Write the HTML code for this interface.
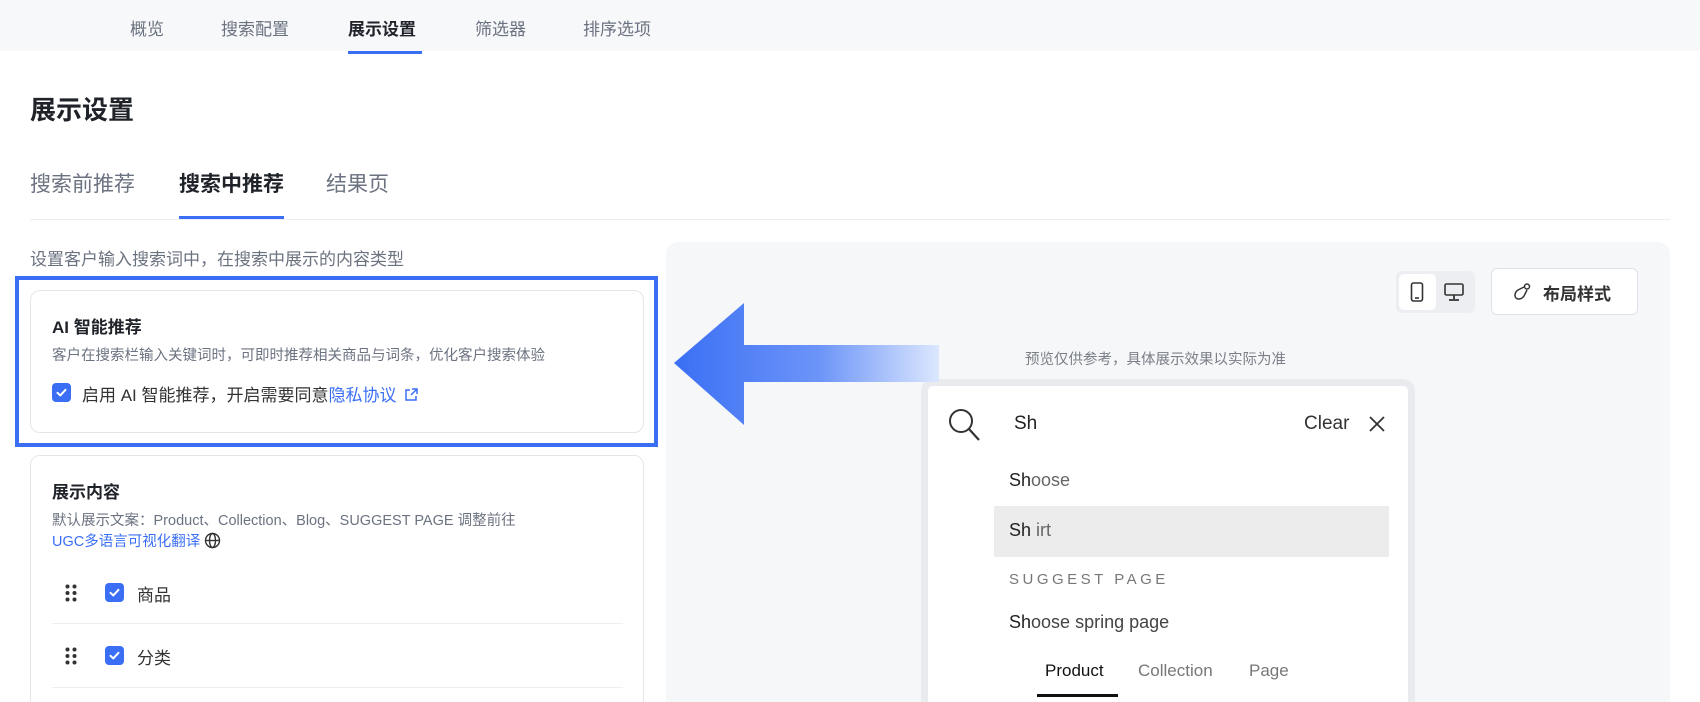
<!DOCTYPE html>
<html style="width:1700px;height:702px;overflow:hidden"><head><meta charset="utf-8"><style>
*{box-sizing:border-box;margin:0;padding:0}
body{width:1700px;height:702px;overflow:hidden;background:#fff;font-family:"Liberation Sans","Noto Sans CJK SC",sans-serif;color:#1f2329;position:relative}
.a{position:absolute;white-space:nowrap}
.nav{position:absolute;left:0;top:0;width:1700px;height:51px;background:#f7f8fa}
.cb{position:absolute;width:19px;height:19px;border-radius:4px;background:#3a6ff5}
.cb svg{position:absolute;left:3px;top:3px}
.grey{color:#6b7280}
</style></head><body>
<div class="nav"></div>
<div class="a grey" style="left:130px;top:15px;font-size:17px">概览</div>
<div class="a grey" style="left:221px;top:15px;font-size:17px">搜索配置</div>
<div class="a" style="left:348px;top:15px;font-size:17px;font-weight:bold;color:#1f2329">展示设置</div>
<div class="a grey" style="left:475px;top:15px;font-size:17px">筛选器</div>
<div class="a grey" style="left:583px;top:15px;font-size:17px">排序选项</div>
<div class="a" style="left:348px;top:51px;width:74px;height:3px;background:#3a6ff5"></div>

<div class="a" style="left:30px;top:90px;font-size:26px;font-weight:bold">展示设置</div>

<div class="a grey" style="left:30px;top:168px;font-size:21px">搜索前推荐</div>
<div class="a" style="left:179px;top:168px;font-size:21px;font-weight:bold">搜索中推荐</div>
<div class="a grey" style="left:326px;top:168px;font-size:21px">结果页</div>
<div class="a" style="left:30px;top:219px;width:1640px;height:1px;background:#eceef1"></div>
<div class="a" style="left:179px;top:216px;width:105px;height:3px;background:#3a6ff5"></div>

<div class="a grey" style="left:30px;top:245px;font-size:17px">设置客户输入搜索词中，在搜索中展示的内容类型</div>

<div class="a" style="left:15px;top:276px;width:643px;height:171px;border:4px solid #3a6ff5"></div>
<div class="a" style="left:30px;top:290px;width:614px;height:143px;border:1px solid #e4e6ea;border-radius:10px;background:#fff"></div>
<div class="a" style="left:52px;top:313px;font-size:17px;font-weight:bold">AI 智能推荐</div>
<div class="a grey" style="left:52px;top:344px;font-size:14.5px">客户在搜索栏输入关键词时，可即时推荐相关商品与词条，优化客户搜索体验</div>
<div class="cb" style="left:52px;top:383px"><svg width="13" height="13" viewBox="0 0 13 13"><path d="M2.5 6.8 5.3 9.4 10.5 3.8" stroke="#fff" stroke-width="2" fill="none" stroke-linecap="round" stroke-linejoin="round"/></svg></div>
<div class="a" style="left:82px;top:381px;font-size:17px;color:#333">启用 AI 智能推荐，开启需要同意<span style="color:#3a6ff5">隐私协议</span> <svg width="16" height="16" viewBox="0 0 16 16" style="vertical-align:-2px;margin-left:2px"><path d="M7 3H3v10h10V9M9 2h5v5M14 2 8 8" stroke="#3a6ff5" stroke-width="1.5" fill="none"/></svg></div>

<div class="a" style="left:30px;top:455px;width:614px;height:300px;border:1px solid #e4e6ea;border-radius:10px;background:#fff"></div>
<div class="a" style="left:52px;top:478px;font-size:17px;font-weight:bold">展示内容</div>
<div class="a grey" style="left:52px;top:509px;font-size:14.5px">默认展示文案：Product、Collection、Blog、SUGGEST PAGE 调整前往</div>
<div class="a" style="left:52px;top:530px;font-size:14.5px;color:#3a6ff5">UGC多语言可视化翻译 <svg width="17" height="17" viewBox="0 0 17 17" style="vertical-align:-3px"><circle cx="8.5" cy="8.5" r="7" stroke="#333" stroke-width="1.4" fill="none"/><ellipse cx="8.5" cy="8.5" rx="3" ry="7" stroke="#333" stroke-width="1.4" fill="none"/><path d="M1.5 8.5h14" stroke="#333" stroke-width="1.4"/></svg></div>
<svg class="a" style="left:65px;top:584px" width="12" height="18"><g fill="#333"><circle cx="2.5" cy="2.5" r="2"/><circle cx="9.5" cy="2.5" r="2"/><circle cx="2.5" cy="9" r="2"/><circle cx="9.5" cy="9" r="2"/><circle cx="2.5" cy="15.5" r="2"/><circle cx="9.5" cy="15.5" r="2"/></g></svg>
<div class="cb" style="left:105px;top:583px"><svg width="13" height="13" viewBox="0 0 13 13"><path d="M2.5 6.8 5.3 9.4 10.5 3.8" stroke="#fff" stroke-width="2" fill="none" stroke-linecap="round" stroke-linejoin="round"/></svg></div>
<div class="a" style="left:137px;top:581px;font-size:17px;color:#333">商品</div>
<div class="a" style="left:52px;top:623px;width:571px;height:1px;background:#eceef1"></div>
<svg class="a" style="left:65px;top:647px" width="12" height="18"><g fill="#333"><circle cx="2.5" cy="2.5" r="2"/><circle cx="9.5" cy="2.5" r="2"/><circle cx="2.5" cy="9" r="2"/><circle cx="9.5" cy="9" r="2"/><circle cx="2.5" cy="15.5" r="2"/><circle cx="9.5" cy="15.5" r="2"/></g></svg>
<div class="cb" style="left:105px;top:646px"><svg width="13" height="13" viewBox="0 0 13 13"><path d="M2.5 6.8 5.3 9.4 10.5 3.8" stroke="#fff" stroke-width="2" fill="none" stroke-linecap="round" stroke-linejoin="round"/></svg></div>
<div class="a" style="left:137px;top:644px;font-size:17px;color:#333">分类</div>
<div class="a" style="left:52px;top:687px;width:571px;height:1px;background:#eceef1"></div>

<div class="a" style="left:666px;top:242px;width:1004px;height:480px;background:#f6f7f9;border-radius:12px"></div>
<div class="a" style="left:1396px;top:271px;width:79px;height:42px;background:#eceef2;border-radius:6px"></div>
<div class="a" style="left:1399px;top:274px;width:37px;height:36px;background:#fff;border-radius:5px"></div>
<svg class="a" style="left:1410px;top:282px" width="14" height="20"><rect x="1.5" y="1" width="11" height="18" rx="2" stroke="#333" stroke-width="1.6" fill="none"/><path d="M5 16h4" stroke="#333" stroke-width="1.6"/></svg>
<svg class="a" style="left:1444px;top:283px" width="20" height="18"><rect x="1" y="1" width="18" height="11" rx="1.5" stroke="#333" stroke-width="1.6" fill="none"/><path d="M10 12v4M5 17h10" stroke="#333" stroke-width="1.8"/></svg>
<div class="a" style="left:1491px;top:268px;width:147px;height:47px;background:#fff;border:1px solid #dfe2e7;border-radius:6px"></div>
<svg class="a" style="left:1512px;top:282px" width="20" height="20" viewBox="0 0 20 20"><path d="M12 5 6 8c-3 2-4 6-2 8s6 1 8-2l3-6" stroke="#333" stroke-width="1.5" fill="none"/><circle cx="15" cy="4.5" r="2.5" stroke="#333" stroke-width="1.5" fill="none"/></svg>
<div class="a" style="left:1543px;top:280px;font-size:17px;font-weight:bold;color:#333">布局样式</div>

<div class="a grey" style="left:1025px;top:348px;font-size:14.5px;color:#7a7f87">预览仅供参考，具体展示效果以实际为准</div>
<div class="a" style="left:921px;top:379px;width:494px;height:360px;background:#fff;border:7px solid #e9ebef;border-radius:12px"></div>
<svg class="a" style="left:947px;top:407px" width="36" height="36" viewBox="0 0 36 36"><circle cx="14" cy="14" r="11" stroke="#333" stroke-width="2" fill="none"/><path d="M22 22l10 11" stroke="#333" stroke-width="2.2"/></svg>
<div class="a" style="left:1014px;top:413px;font-size:19px;color:#222">Sh</div>
<div class="a" style="left:1304px;top:413px;font-size:19px;color:#333">Clear</div>
<svg class="a" style="left:1368px;top:415px" width="18" height="18"><path d="M2 2l14 14M16 2 2 16" stroke="#333" stroke-width="1.8"/></svg>
<div class="a" style="left:1009px;top:470px;font-size:18px;color:#222">Sh<span style="color:#666">oose</span></div>
<div class="a" style="left:994px;top:506px;width:395px;height:51px;background:#ececec"></div>
<div class="a" style="left:1009px;top:520px;font-size:18px;color:#222">Sh <span style="color:#666">irt</span></div>
<div class="a" style="left:1009px;top:571px;font-size:15px;color:#777;letter-spacing:3.5px">SUGGEST PAGE</div>
<div class="a" style="left:1009px;top:612px;font-size:18px;color:#222">Sh<span style="color:#444">oose spring page</span></div>
<div class="a" style="left:1045px;top:661px;font-size:17px;color:#111">Product</div>
<div class="a" style="left:1138px;top:661px;font-size:17px;color:#777">Collection</div>
<div class="a" style="left:1249px;top:661px;font-size:17px;color:#777">Page</div>
<div class="a" style="left:1037px;top:694px;width:81px;height:3px;background:#111"></div>

<svg class="a" style="left:674px;top:300px" width="270" height="128" viewBox="0 0 270 128">
<defs><linearGradient id="g" x1="0" x2="1" y1="0" y2="0"><stop offset="0" stop-color="#3a6ff5"/><stop offset="0.55" stop-color="#6d95f8"/><stop offset="1" stop-color="#dce7fe"/></linearGradient></defs>
<path d="M0 63 70 3V45H265V82H70V125Z" fill="url(#g)"/>
</svg>
</body></html>
